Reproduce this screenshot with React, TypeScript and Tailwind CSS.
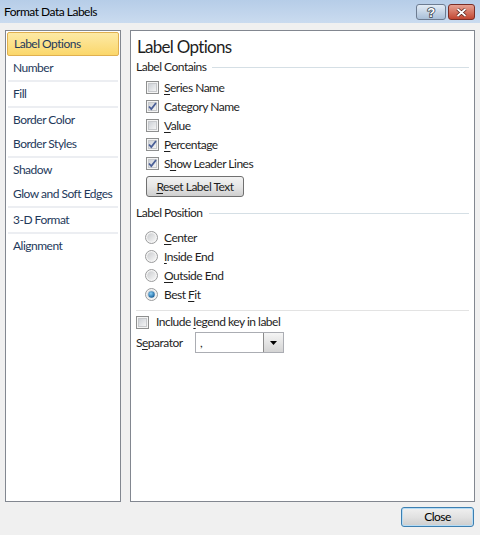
import React from "react";

const font = "font-['Lato','Liberation_Sans',sans-serif] tracking-[-0.5px]";

const Check = ({ checked }: { checked?: boolean }) => (
  <svg width="13" height="13" viewBox="0 0 13 13" className="shrink-0">
    <defs>
      <linearGradient id="cbg" x1="0" y1="0" x2="1" y2="1">
        <stop offset="0" stopColor="#cbcfd5" />
        <stop offset="1" stopColor="#f6f6f6" />
      </linearGradient>
    </defs>
    <rect x="0.5" y="0.5" width="12" height="12" fill="#f4f4f4" stroke="#8e8f8f" />
    <rect x="2.5" y="2.5" width="8" height="8" fill="url(#cbg)" stroke="#c7c9cc" />
    {checked && (
      <path d="M3 6.5 L5.3 9 L10 3" fill="none" stroke="#4a5f97" strokeWidth="1.8" />
    )}
  </svg>
);

const Radio = ({ on }: { on?: boolean }) => (
  <svg width="13" height="13" viewBox="0 0 13 13" className="shrink-0">
    <defs>
      <linearGradient id="rbg" x1="0" y1="0" x2="1" y2="1">
        <stop offset="0" stopColor="#c9cbce" />
        <stop offset="1" stopColor="#f7f7f7" />
      </linearGradient>
      <radialGradient id="rdot" cx="0.4" cy="0.35" r="0.7">
        <stop offset="0" stopColor="#8ad0f7" />
        <stop offset="1" stopColor="#0f5894" />
      </radialGradient>
    </defs>
    <circle cx="6.5" cy="6.5" r="6" fill="#f4f4f4" stroke="#9a9b9c" />
    <circle cx="6.5" cy="6.5" r="4.3" fill="url(#rbg)" />
    {on && <circle cx="6.5" cy="6.5" r="3.2" fill="url(#rdot)" />}
  </svg>
);

const U = ({ children }: { children: React.ReactNode }) => (
  <span className="underline underline-offset-2">{children}</span>
);

const navItems: { label: string; sep?: boolean; selected?: boolean }[] = [
  { label: "Label Options", selected: true },
  { label: "Number", sep: true },
  { label: "Fill", sep: true },
  { label: "Border Color" },
  { label: "Border Styles", sep: true },
  { label: "Shadow" },
  { label: "Glow and Soft Edges", sep: true },
  { label: "3-D Format", sep: true },
  { label: "Alignment" },
];

const GroupTitle = ({ text }: { text: string }) => (
  <div className="flex items-center h-[16px] pr-[5px]">
    <span className="text-[12px] text-[#1e1e1e]">{text}</span>
    <div className="flex-1 h-px bg-[#d5dfe5] ml-[6px]" />
  </div>
);

export default function App() {
  return (
    <div className={`w-[480px] h-[535px] bg-[#f0f0f0] flex flex-col ${font}`}>
      <div className="h-[23px] bg-gradient-to-b from-[#b6cde8] to-[#cadbef] flex items-center pl-[4px] pr-[5px]">
        <span className="text-[12px] text-black">Format Data Labels</span>
        <div className="ml-auto flex gap-[2px] self-start mt-[4px]">
          <div className="w-[30px] h-[16px] rounded-[3px] border border-[#6d7c91] bg-gradient-to-b from-[#e3ecf6] to-[#a9bfd8] flex items-center justify-center">
            <svg width="12" height="14" viewBox="0 0 12 14">
              <text
                x="6"
                y="12"
                textAnchor="middle"
                fontFamily="Liberation Sans, sans-serif"
                fontWeight="bold"
                fontSize="13"
                fill="#fff"
                stroke="#3a4450"
                strokeWidth="1.6"
                paintOrder="stroke"
              >
                ?
              </text>
            </svg>
          </div>
          <div className="w-[27px] h-[16px] rounded-[3px] border border-[#7a2d25] bg-gradient-to-b from-[#e6a192] to-[#c14530] flex items-center justify-center">
            <svg width="11" height="9" viewBox="0 0 11 9">
              <path d="M1.5 1 L9.5 8 M9.5 1 L1.5 8" stroke="#4a1a14" strokeWidth="3.2" />
              <path d="M1.5 1 L9.5 8 M9.5 1 L1.5 8" stroke="#fff" strokeWidth="1.8" />
            </svg>
          </div>
        </div>
      </div>

      <div className="flex gap-[9px] px-[5px] mt-[7px]">
        <div className="w-[116px] h-[472px] border border-[#828790] bg-white p-px flex flex-col">
          {navItems.map((item) => (
            <React.Fragment key={item.label}>
              <div
                className={`h-[24px] flex items-center whitespace-nowrap pl-[6px] text-[12px] text-[#1e395b] ${
                  item.selected
                    ? "rounded-[2px] border border-[#e0b050] bg-gradient-to-b from-[#fdeaa5] to-[#fbd76a] pl-[5px]"
                    : ""
                }`}
              >
                {item.label}
              </div>
              {item.sep && <div className="h-[2px] mx-[1px] bg-[#eceef2]" />}
            </React.Fragment>
          ))}
        </div>

        <div className="w-[345px] h-[472px] border border-[#828790] bg-white flex flex-col pl-[5px] text-[12px] text-[#1e1e1e]">
          <div className="h-[22px] mt-[5px] pl-px flex items-center text-[17px] tracking-[-0.7px] text-[#1e1e1e]">Label Options</div>
          <div className="mt-[1px]">
            <GroupTitle text="Label Contains" />
          </div>
          <div className="flex flex-col pl-[10px] mt-[3px]">
            {[
              { t: <><U>S</U>eries Name</>, c: false },
              { t: <>Category Name</>, c: true },
              { t: <><U>V</U>alue</>, c: false },
              { t: <><U>P</U>ercentage</>, c: true },
              { t: <>S<U>h</U>ow Leader Lines</>, c: true },
            ].map((r, i) => (
              <div key={i} className="h-[19px] flex items-center gap-[5px]">
                <Check checked={r.c} />
                <span>{r.t}</span>
              </div>
            ))}
            <div className="mt-[3px] w-[98px] h-[21px] rounded-[3px] border border-[#707070] bg-gradient-to-b from-[#f2f2f2] via-[#e6e6e6] to-[#cfcfcf] flex items-center justify-center">
              <span><U>R</U>eset Label Text</span>
            </div>
          </div>
          <div className="mt-[8px]">
            <GroupTitle text="Label Position" />
          </div>
          <div className="flex flex-col pl-[9px] mt-[7px]">
            {[
              { t: <><U>C</U>enter</> },
              { t: <><U>I</U>nside End</> },
              { t: <><U>O</U>utside End</> },
              { t: <>Best <U>F</U>it</>, on: true },
            ].map((r, i) => (
              <div key={i} className="h-[19px] flex items-center gap-[6px]">
                <Radio on={r.on} />
                <span>{r.t}</span>
              </div>
            ))}
          </div>
          <div className="h-px bg-[#e3e3e3] mt-[6px] mr-[5px]" />
          <div className="h-[18px] mt-[2px] flex items-center gap-[7px]">
            <Check />
            <span>Include <U>l</U>egend key in label</span>
          </div>
          <div className="flex items-center mt-[1px]">
            <span className="w-[59px]">S<U>e</U>parator</span>
            <div className="w-[89px] h-[21px] border border-[#abadb3] flex items-center">
              <span className="pl-[4px] flex-1">,</span>
              <div className="w-[20px] h-[19px] border-l border-[#8b8b8b] bg-gradient-to-b from-[#f5f5f5] to-[#d4d4d4] flex items-center justify-center">
                <svg width="8" height="4" viewBox="0 0 8 4">
                  <path d="M0 0 H7 L3.5 4 Z" fill="#000" />
                </svg>
              </div>
            </div>
          </div>
        </div>
      </div>

      <div className="flex justify-end pr-[6px] mt-[5px]">
        <div className="w-[73px] h-[20px] rounded-[3px] border border-[#3c7fb1] bg-gradient-to-b from-[#f0f0f0] via-[#e2e2e2] to-[#cdcdcd] flex items-center justify-center text-[12px] text-black shadow-[inset_0_0_0_1px_#b6dcf5]">
          Close
        </div>
      </div>
    </div>
  );
}
